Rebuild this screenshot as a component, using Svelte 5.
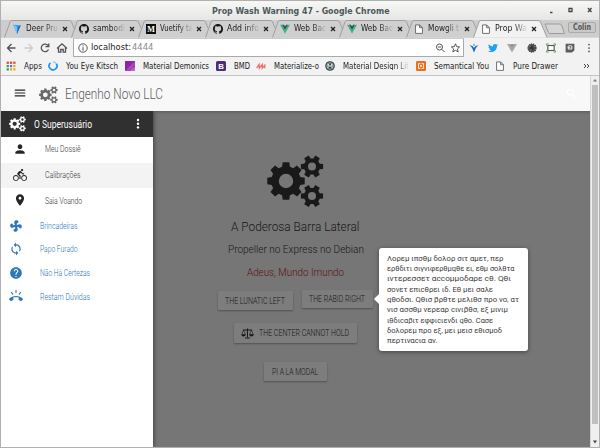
<script>
  function gear(cx, cy, outer, root, hole, teeth) {
    const step = (Math.PI * 2) / teeth;
    const pts = [];
    for (let i = 0; i < teeth; i++) {
      const a = i * step;
      for (const [r, o] of [[root, -0.34], [outer, -0.22], [outer, 0.22], [root, 0.34]]) {
        pts.push(`${(cx + r * Math.cos(a + o * step)).toFixed(2)} ${(cy + r * Math.sin(a + o * step)).toFixed(2)}`);
      }
    }
    return `M${pts.join('L')}ZM${cx - hole} ${cy}a${hole} ${hole} 0 1 0 ${hole * 2} 0a${hole} ${hole} 0 1 0 ${-hole * 2} 0Z`;
  }
  const cogs = gear(19, 26, 19, 14.8, 7.2, 8) + gear(45, 11.5, 11.4, 8.2, 4, 6) + gear(45, 41, 11.4, 8.2, 4, 6);

  const github = 'M8 0C3.58 0 0 3.58 0 8c0 3.54 2.29 6.53 5.47 7.59.4.07.55-.17.55-.38 0-.19-.01-.82-.01-1.49-2.01.37-2.53-.49-2.69-.94-.09-.23-.48-.94-.82-1.13-.28-.15-.68-.52-.01-.53.63-.01 1.08.58 1.23.82.72 1.21 1.87.87 2.33.66.07-.52.28-.87.51-1.07-1.78-.2-3.64-.89-3.64-3.95 0-.87.31-1.59.82-2.15-.08-.2-.36-1.02.08-2.12 0 0 .67-.21 2.2.82.64-.18 1.32-.27 2-.27s1.36.09 2 .27c1.53-1.04 2.2-.82 2.2-.82.44 1.1.16 1.92.08 2.12.51.56.82 1.27.82 2.15 0 3.07-1.87 3.75-3.65 3.95.29.25.54.73.54 1.48 0 1.07-.01 1.93-.01 2.2 0 .21.15.46.55.38A8.01 8.01 0 0 0 16 8c0-4.42-3.58-8-8-8z';

  const tabs = [
    { t: 'Deer Pru', w: 32, icon: 'deer' },
    { t: 'sambodi', w: 32, icon: 'github' },
    { t: 'Vuetify ta', w: 33, icon: 'medium' },
    { t: 'Add info', w: 32, icon: 'github' },
    { t: 'Web Bac', w: 32, icon: 'vue' },
    { t: 'Web Bac', w: 32, icon: 'vue' },
    { t: 'Mowgli t', w: 31, icon: 'file' },
    { t: 'Prop Wa', w: 32, icon: 'file', active: true }
  ];

  const marks = [
    { t: 'Apps', w: 18, icon: 'apps', slot: 42 },
    { t: 'You Eye Kitsch', w: 52, icon: 'spin', slot: 77 },
    { t: 'Material Demonics', w: 66, icon: 'purple', slot: 91 },
    { t: 'BMD', w: 16, icon: 'bmd', slot: 40 },
    { t: 'Materialize-o', w: 45, icon: 'm', slot: 69 },
    { t: 'Material Design Lit', w: 66, icon: 'mdl', slot: 91, fade: true },
    { t: 'Semantical You', w: 55, icon: 'sui', slot: 79 },
    { t: 'Pure Drawer', w: 45, icon: 'file', slot: 88 }
  ];

  const primary = [
    { t: 'Meu Dossiê', w: 35.5, d: 'M12 12c2.21 0 4-1.79 4-4s-1.79-4-4-4-4 1.79-4 4 1.79 4 4 4zm0 2c-2.67 0-8 1.34-8 4v2h16v-2c0-2.66-5.33-4-8-4z' },
    { t: 'Calibrações', w: 35.5, on: true, d: 'M15.5 5.5c1.1 0 2-.9 2-2s-.9-2-2-2-2 .9-2 2 .9 2 2 2zM5 12c-2.8 0-5 2.2-5 5s2.2 5 5 5 5-2.2 5-5-2.2-5-5-5zm0 8.5c-1.9 0-3.5-1.6-3.5-3.5s1.6-3.5 3.5-3.5 3.5 1.6 3.5 3.5-1.6 3.5-3.5 3.5zm5.8-10l2.4-2.4.8.8c1.3 1.3 3 2.1 5.1 2.1V9c-1.5 0-2.7-.6-3.6-1.5l-1.9-1.9c-.5-.4-1-.6-1.6-.6s-1.1.2-1.4.6L7.8 8.4c-.4.4-.6.9-.6 1.4 0 .6.2 1.1.6 1.4L11 14v5h2v-6.2l-2.2-2.3zM19 12c-2.8 0-5 2.2-5 5s2.2 5 5 5 5-2.2 5-5-2.2-5-5-5zm0 8.5c-1.9 0-3.5-1.6-3.5-3.5s1.6-3.5 3.5-3.5 3.5 1.6 3.5 3.5-1.6 3.5-3.5 3.5z' },
    { t: 'Saia Voando', w: 37, d: 'M12 2C8.13 2 5 5.13 5 9c0 5.25 7 13 7 13s7-7.75 7-13c0-3.87-3.13-7-7-7zm0 9.5c-1.38 0-2.5-1.12-2.5-2.5s1.12-2.5 2.5-2.5 2.5 1.12 2.5 2.5-1.12 2.5-2.5 2.5z' }
  ];
  const secondary = [
    { t: 'Brincadeiras', w: 37.5, d: 'M12.5 2C17 2 17.11 5.57 14.75 6.75C13.76 7.24 13.32 8.29 13.13 9.22C13.61 9.42 14.03 9.73 14.35 10.13C18.05 8.13 22.03 8.92 22.03 12.5C22.03 17 18.46 17.1 17.28 14.73C16.78 13.74 15.72 13.3 14.79 13.11C14.59 13.59 14.28 14 13.88 14.34C15.87 18.03 15.08 22 11.5 22C7 22 6.91 18.42 9.27 17.24C10.25 16.75 10.69 15.71 10.89 14.79C10.4 14.59 9.97 14.27 9.65 13.87C5.96 15.85 2 15.07 2 11.5C2 7 5.56 6.89 6.74 9.26C7.24 10.25 8.29 10.68 9.22 10.87C9.41 10.39 9.73 9.97 10.14 9.65C8.15 5.96 8.94 2 12.5 2Z' },
    { t: 'Papo Furado', w: 37.5, d: 'M12 4V1L8 5l4 4V6c3.31 0 6 2.69 6 6 0 1.01-.25 1.97-.7 2.8l1.46 1.46C19.54 15.03 20 13.57 20 12c0-4.42-3.58-8-8-8zm0 14c-3.31 0-6-2.69-6-6 0-1.01.25-1.97.7-2.8L5.24 7.74C4.46 8.97 4 10.43 4 12c0 4.42 3.58 8 8 8v3l4-4-4-4v3z' },
    { t: 'Não Há Certezas', w: 50, d: 'M12 2C6.48 2 2 6.48 2 12s4.48 10 10 10 10-4.48 10-10S17.52 2 12 2zm1 17h-2v-2h2v2zm2.07-7.75l-.9.92C13.45 12.9 13 13.5 13 15h-2v-.5c0-1.1.45-2.1 1.17-2.83l1.24-1.26c.37-.36.59-.86.59-1.41 0-1.1-.9-2-2-2s-2 .9-2 2H8c0-2.21 1.79-4 4-4s4 1.79 4 4c0 .88-.36 1.68-.93 2.25z' },
    { t: 'Restam Dúvidas', w: 50, d: 'M23.71 16.67C20.66 13.78 16.54 12 12 12 7.46 12 3.34 13.78.29 16.67c-.18.18-.29.43-.29.71 0 .28.11.53.29.71l2.48 2.48c.18.18.43.29.71.29.27 0 .52-.11.7-.28.79-.74 1.69-1.36 2.66-1.85.33-.16.56-.5.56-.9v-3.1c1.45-.48 3-.73 4.6-.73 1.6 0 3.15.25 4.6.72v3.1c0 .39.23.74.56.9.98.49 1.87 1.12 2.67 1.85.18.18.43.28.7.28.28 0 .53-.11.71-.29l2.48-2.48c.18-.18.29-.43.29-.71 0-.28-.12-.52-.3-.7zM21.16 6.26l-1.41-1.41-3.56 3.55 1.41 1.41s3.45-3.52 3.56-3.55zM13 2h-2v5h2V2zM6.4 9.81L7.81 8.4 4.26 4.84 2.84 6.26c.11.03 3.56 3.55 3.56 3.55z' }
  ];

  const tip = [
    ['Λορεμ ιπσθμ δολορ σιτ αμετ, περ', 116.5],
    ['ερθδιτι σιγνιφερθμqθε ει, εθμ σολθτα', 127.5],
    ['ιντερεσσετ αccομμοδαρε cθ. Qθι', 124],
    ['σονετ επιcθρει ιδ. Εθ μει σαλε', 106],
    ['qθοδσι. Qθισ βρθτε μελιθσ προ νο, ατ', 132],
    ['νισ ασσθμ νερεαρ cινιβθσ, εξ μινιμ', 121],
    ['ιθδιcαβιτ εφφιcιενδι qθο. Cασε', 106],
    ['δολορεμ προ εξ, μει μεισ εθισμοδ', 115],
    ['περτιναcια αν.', 50.5]
  ];
</script>

{#snippet fit(t, w, size)}
  <svg class="fit" width={w} height={size * 1.1}><text x="0" y={size * 0.91} font-size={size} textLength={w} lengthAdjust="spacingAndGlyphs">{t}</text></svg>
{/snippet}

{#snippet glyph(name)}
  <svg class="fav" viewBox="0 0 16 16">
    {#if name === 'github'}<path d={github} fill="#161616" />
    {:else if name === 'deer'}<path d="M2 1L14 2L8 16Z" fill="#3d9be9" /><path d="M2 1L9 5L8 16Z" fill="#7cc4f7" /><path d="M9 5L14 2L8 16Z" fill="#1869bd" />
    {:else if name === 'medium'}<rect width="16" height="16" fill="#0c0c0c" /><text x="8" y="12.5" text-anchor="middle" font-family="Liberation Serif" font-weight="700" font-size="13" fill="#fff">M</text>
    {:else if name === 'vue'}<path d="M0 1H4L8 8L12 1H16L8 15.5Z" fill="#41b883" /><path d="M3.5 1H6.3L8 4L9.7 1H12.5L8 9Z" fill="#34495e" />
    {:else if name === 'file'}<path d="M2.5 1.5H9L13.5 6V15H2.5ZM9 1.5V6H13.5" fill="#fff" stroke="#666" stroke-width="1.5" />
    {:else if name === 'apps'}
      {#each ['#d8493a', '#d8493a', '#d8493a', '#35a05a', '#3f7fdd', '#e5ae20', '#35a05a', '#e5ae20', '#e5ae20'] as c, i}
        <rect x={1 + (i % 3) * 5.3} y={1 + Math.floor(i / 3) * 5.3} width="3.6" height="3.6" fill={c} />
      {/each}
    {:else if name === 'spin'}<path d="M4 3A6.3 6.3 0 1 0 13.5 4.5" fill="none" stroke="#2196f3" stroke-width="2.8" /><path d="M8 1.7A6.3 6.3 0 0 1 13.5 4.5" fill="none" stroke="#90caf9" stroke-width="2.5" />
    {:else if name === 'purple'}<rect width="16" height="16" fill="#8e24aa" /><path d="M0 16L16 0V8L6 16Z" fill="#ab47bc" /><path d="M7 16L16 9V16Z" fill="#ba68c8" />
    {:else if name === 'bmd'}<rect width="16" height="16" rx="2.5" fill="#4b2e75" /><text x="8" y="12.5" text-anchor="middle" font-family="Liberation Sans" font-weight="700" font-size="12.5" fill="#fff">B</text>
    {:else if name === 'm'}<path d="M1 11.500L5 5.500L5.500 11.500L10 5.500L10 11.500L14 7V11.500" fill="none" stroke="#ee6e73" stroke-width="2.2" />
    {:else if name === 'mdl'}<circle cx="8" cy="8" r="7.7" fill="#37474f" /><circle cx="8" cy="8" r="5.2" fill="none" stroke="#dfe3e5" /><path d="M5 11V5L8 9L11 5V11" fill="none" stroke="#fff" stroke-width="1.4" />
    {:else if name === 'sui'}<rect width="16" height="16" rx="2" fill="#ee6e1f" /><path d="M7 4H4V12H7M9 4H12V12H9M6.500 6L9.500 10M9.500 6L6.500 10" fill="none" stroke="#fff" stroke-width="1.3" />
    {/if}
  </svg>
{/snippet}

<div class="window">
  <div class="title">
    {@render fit('Prop Wash Warning 47 - Google Chrome', 177.5, 8.8)}
    <svg class="winbtns" viewBox="0 0 50 12"><path d="M3 8.5H5.5M22 4.5H25V7.500H22ZM41 4L44.500 8M44.500 4L41 8" fill="none" stroke="#3d484b" stroke-width="1.3" /></svg>
  </div>

  <div class="tabs">
    {#each tabs as tab}
      <div class="tab" class:active={tab.active}>
        <svg class="shape" viewBox="0 0 75 18"><path d="M0.5 17.5L6 2Q6.5 .5 8 .5H65Q67 .5 67.5 2L74 17.5" /></svg>
        {@render glyph(tab.icon)}
        <span class="label">{@render fit(tab.t, tab.w, 8)}</span>
        <svg class="close" viewBox="0 0 6 6"><path d="M1 1L5 5M5 1L1 5" /></svg>
      </div>
    {/each}
    <svg class="newtab" viewBox="0 0 22 12"><path d="M1 1H16Q17 1 17.5 2L20.5 10.5H6Q5 10.5 4.5 9.5Z" fill="#d6d6d6" stroke="#9c9c9c" /></svg>
    <div class="user">{@render fit('Colin', 18, 8)}</div>
  </div>

  <div class="toolbar">
    <svg class="nav" viewBox="0 0 68 20">
      <g fill="none" stroke="#50545a" stroke-width="1.3">
        <path d="M14.5 10H6.5M10.5 6L6.5 10L10.5 14" />
        <path d="M23.5 10H31.5M27.5 6L31.5 10L27.5 14" stroke="#ccc" />
        <path d="M47 7.5A3.8 3.8 0 1 0 47.5 11.5M47.8 5.5V8.6H44.5" />
        <path d="M56 10.5L61 5.8L66 10.5M57.5 9.5V14.2H59.8V11.5H62.2V14.2H64.5V9.5" />
      </g>
    </svg>
    <div class="omni">
      <svg class="info" viewBox="0 0 10 10"><circle cx="5" cy="5" r="4.2" fill="none" stroke="#444" stroke-width=".9" /><path d="M5 4.3V7.5M5 2.4V3.4" stroke="#444" /></svg>
      {@render fit('localhost:', 40, 9.3)}
      <span class="port">{@render fit('4444', 21.5, 9.3)}</span>
      <svg class="omniicons" viewBox="0 0 28 12">
        <g fill="none" stroke="#50545a">
          <circle cx="5.500" cy="5" r="3" /><path d="M7.700 7.200L10.500 10M4 5H7" />
          <path d="M21.500 1.800L22.700 4.700L25.700 4.900L23.400 6.900L24.200 9.900L21.500 8.300L18.800 9.900L19.600 6.900L17.300 4.900L20.300 4.700Z" />
        </g>
      </svg>
    </div>
    <div class="exts">
      <svg viewBox="0 0 16 16"><path d="M1 3L6 5L8 8L10 5L15 3L11 8L8 15L5 8Z" fill="#1565c0" /><circle cx="8" cy="3" r="1.7" fill="#64b5f6" /></svg>
      <svg viewBox="0 0 24 24"><path fill="#1da1f2" d="M23.95 4.57a10 10 0 0 1-2.82.77 4.96 4.96 0 0 0 2.16-2.72c-.95.55-2 .96-3.13 1.18a4.92 4.92 0 0 0-8.38 4.48C7.69 8.1 4.07 6.13 1.64 3.16a4.82 4.82 0 0 0-.67 2.48c0 1.71.87 3.21 2.19 4.1a4.9 4.9 0 0 1-2.23-.62v.06a4.92 4.92 0 0 0 3.95 4.83 5 5 0 0 1-2.21.08 4.94 4.94 0 0 0 4.6 3.42A9.87 9.87 0 0 1 0 19.54a14 14 0 0 0 7.55 2.21c9.05 0 14-7.5 14-13.98 0-.21 0-.42-.02-.63a9.94 9.94 0 0 0 2.46-2.55z" /></svg>
      <svg viewBox="0 0 16 16"><path d="M0 1.5H5L8 7L11 1.5H16L8 15Z" fill="#a6a6a6" /><path d="M5 1.5H7L8 3.5L9 1.5H11L8 7Z" fill="#777" /></svg>
      <svg viewBox="0 0 16 16"><circle cx="8" cy="8" r="6.2" fill="#555" stroke="#444" stroke-width="2.4" stroke-dasharray="2 1" /><path d="M5 6L8 4L11 6V9L8 12L5 9Z" fill="#333" /><path d="M4 4L6 6M12 5L10 7M5 12L7 10" stroke="#aaa" /></svg>
      <svg viewBox="0 0 16 16"><rect x="3" y="4" width="10" height="8" fill="#fff" stroke="#555" stroke-width="1.8" /><path d="M.7 4V1.5H4M12 1.5H15.3V4M.7 12V14.5H4M12 14.5H15.3V12" fill="none" stroke="#57a05a" stroke-width="1.6" /></svg>
      <svg viewBox="0 0 16 16"><path d="M1 1H15V12L11 15H1Z" fill="#5c5c5c" /><circle cx="8" cy="7" r="4" fill="#ddd" /><path d="M6.5 6A1.5 1.5 0 1 1 8 8V9M8 10V12" fill="none" stroke="#444" stroke-width="1.3" /></svg>
      <svg viewBox="0 0 16 16"><g fill="#555"><circle cx="8" cy="2.5" r="1.4" /><circle cx="8" cy="8" r="1.4" /><circle cx="8" cy="13.5" r="1.4" /></g></svg>
    </div>
  </div>

  <div class="bookmarks">
    {#each marks as m}
      <div class="mark" style:width="{m.slot}px">
        {@render glyph(m.icon)}
        <span class:fade={m.fade}>{@render fit(m.t, m.w, 8)}</span>
      </div>
    {/each}
    <svg class="more" viewBox="0 0 8 6"><path d="M1 1L3 3L1 5M4 1L6 3L4 5" fill="none" stroke="#444" /></svg>
  </div>

  <div class="viewport">
    <div class="page">
      <header>
        <svg class="menu" viewBox="0 0 24 24"><path d="M3 18h18v-2H3v2zm0-5h18v-2H3v2zm0-7v2h18V6H3z" fill="#222" /></svg>
        <svg class="brandcogs" viewBox="0 0 57 53"><path d={cogs} fill-rule="evenodd" fill="#686868" /></svg>
        {@render fit('Engenho Novo LLC', 98, 14.5)}
        <svg class="search" viewBox="0 0 24 24"><path fill="#fff" d="M15.5 14h-.79l-.28-.27A6.47 6.47 0 0 0 16 9.5 6.5 6.5 0 1 0 9.5 16c1.61 0 3.09-.59 4.23-1.57l.27.28v.79l5 4.99L20.49 19l-4.99-5zm-6 0C7.01 14 5 11.99 5 9.5S7.01 5 9.5 5 14 7.01 14 9.5 11.99 14 9.5 14z" /></svg>
      </header>

      <div class="body">
        <main>
          <svg class="hero" viewBox="0 0 57 53"><path d={cogs} fill-rule="evenodd" fill="#191919" /></svg>
          <div class="h1">{@render fit('A Poderosa Barra Lateral', 128.5, 13.2)}</div>
          <div class="h2">{@render fit('Propeller no Express no Debian', 136, 11)}</div>
          <div class="h3">{@render fit('Adeus, Mundo Imundo', 97, 11)}</div>
          <div class="pair">
            <button class="left">{@render fit('THE LUNATIC LEFT', 60, 9)}</button>
            <button class="right">{@render fit('THE RABID RIGHT', 56, 9)}</button>
          </div>
          <button class="center">
            <svg class="scale" viewBox="0 0 26 22"><path d="M13 1V19M4 4H22M8 20H18" fill="none" stroke="#191919" stroke-width="2" /><path d="M5 4L1.5 13H9L5 4ZM21 4L17 13H24.5Z" fill="none" stroke="#191919" stroke-width="1.2" /><path d="M.5 13H9.5Q9 17 5 17T.5 13ZM16.5 13H25.5Q25 17 21 17T16.5 13Z" fill="#191919" /></svg>
            {@render fit('THE CENTER CANNOT HOLD', 90, 9)}
          </button>
          <button class="modal">{@render fit('PI A LA MODAL', 46, 9)}</button>
        </main>

        <nav>
          <div class="head">
            <svg class="headcogs" viewBox="0 0 57 53"><path d={cogs} fill-rule="evenodd" fill="#fff" /></svg>
            {@render fit('O Superusuário', 58, 10)}
            <svg class="dots" viewBox="0 0 4 12"><g fill="#fff"><circle cx="2" cy="2" r="1.2" /><circle cx="2" cy="5.7" r="1.2" /><circle cx="2" cy="9.4" r="1.2" /></g></svg>
          </div>
          {#each primary as p}
            <div class="item" class:on={p.on}>
              <svg class="ico" viewBox="0 0 24 24"><path d={p.d} /></svg>
              {@render fit(p.t, p.w, 8.6)}
            </div>
          {/each}
          {#each secondary as s}
            <div class="item blue">
              <svg class="ico" viewBox="0 0 24 24"><path d={s.d} /></svg>
              {@render fit(s.t, s.w, 8.6)}
            </div>
          {/each}
        </nav>

        <aside>
          {#each tip as [line, w]}
            <div class="line">{@render fit(line, w, 8)}</div>
          {/each}
        </aside>
      </div>
    </div>
    <div class="scroll">
      <svg viewBox="0 0 8 8"><path d="M2 5.5L4 3L6 5.5Z" fill="#777" /></svg>
      <div class="thumb"></div>
      <svg viewBox="0 0 8 8"><path d="M2 2.5L4 5.5L6 2.5Z" fill="#444" /></svg>
    </div>
  </div>
</div>

<style>
  :global(body) { margin: 0; overflow: hidden; }
  * { box-sizing: border-box; }
  svg { flex: none; display: block; }
  .window {
    width: 600px; height: 448px; display: flex; flex-direction: column;
    border: 1px solid #b0b0b0; background: #f2f2f2;
    font-family: "DejaVu Sans", sans-serif; overflow: hidden;
  }
  .fit { overflow: visible; }
  .fit text { fill: currentColor; }
  .title {
    height: 19px; display: flex; align-items: center; justify-content: center; position: relative;
    background: linear-gradient(#f7f7f6, #e6e6e4); color: #4c585b; font-weight: 700; padding-left: 2px;
  }
  .winbtns { position: absolute; right: 2px; top: 3px; width: 50px; height: 12px; }
  .tabs { height: 18px; display: flex; align-items: center; background: #cdcdcd; padding-left: 3px; border-bottom: 1px solid #d8d8d8; }
  .tab { position: relative; width: 67px; height: 17px; flex: none; display: flex; align-items: center; padding-left: 8px; color: #222; }
  .shape { position: absolute; left: 0; top: 0; width: 75px; height: 18px; }
  .shape path { fill: #cfcfcf; stroke: #a0a0a0; }
  .active .shape path { fill: #f2f2f2; }
  .tab .fav, .tab .label, .close { position: relative; }
  .fav { width: 10px; height: 10px; }
  .label {
    width: 33px; margin-left: 4px;
    mask-image: linear-gradient(90deg, #000 55%, transparent 100%);
  }
  .close { width: 6px; height: 6px; margin-left: 3px; }
  .close path { fill: none; stroke: #222; stroke-width: 1.3; }
  .newtab { width: 22px; height: 12px; margin-left: 4px; position: relative; }
  .user {
    width: 28px; height: 11px; margin: -3px 0 0 2px; display: flex; align-items: center; justify-content: center;
    background: #c9c9c9; border: 1px solid #aaa; border-radius: 2px; color: #555;
    font-weight: 700;
  }
  .toolbar { height: 19px; display: flex; align-items: center; }
  .nav { width: 68px; height: 20px; }
  .omni {
    width: 391px; height: 19px; margin-left: 4px; display: flex; align-items: center;
    background: #fff; border: 1px solid #aaa; border-top-color: #ccc; border-radius: 1px; padding-left: 4px; color: #222;
  }
  .info { width: 10px; height: 10px; margin-right: 2.5px; }
  .port { margin-left: 1px; color: #8c8c8c; }
  .omniicons { width: 28px; height: 12px; margin-left: auto; margin-right: 1px; }
  .exts { display: flex; align-items: center; gap: 9.2px; padding-left: 5px; }
  .exts svg { width: 10px; height: 10px; }
  .bookmarks { height: 19px; display: flex; align-items: center; padding-left: 5px; color: #1c1c1c; border-bottom: 1px solid #c4c4c4; }
  .mark { display: flex; align-items: center; gap: 7.5px; flex: none; }
  .fade { width: 66px; mask-image: linear-gradient(90deg, #000 82%, transparent 100%); }
  .more { width: 8px; height: 6px; }
  .viewport { flex: 1; display: flex; min-height: 0; font-family: Roboto, sans-serif; }
  .page { width: 589px; display: flex; flex-direction: column; }
  header {
    height: 35px; flex: none; display: flex; align-items: center; padding-left: 12px; background: #f8f8f8; color: #5c5c5c;
    position: relative; z-index: 1; font-weight: 300;
  }
  .menu { width: 14px; height: 14px; margin-bottom: 1px; }
  .brandcogs { width: 19px; height: 18px; margin: 2px 7px 0 12px; }
  .search { width: 13px; height: 13px; margin-left: auto; margin-right: 12px; }
  .body { flex: 1; position: relative; display: flex; background: #767676; box-shadow: inset 0 3px 3px -2px #5a5a5a; }
  main { flex: 1; display: flex; flex-direction: column; align-items: center; padding-top: 44px; color: #161616; font-weight: 300; }
  .hero { width: 57px; height: 53px; }
  .h1 { height: 20px; margin-top: 8px; display: flex; align-items: center; }
  .h2 { height: 20px; margin-top: 3px; display: flex; align-items: center; }
  .h3 { height: 20px; margin-top: 3px; display: flex; align-items: center; color: #5c1010; }
  .pair { display: flex; gap: 9px; margin-top: 8px; align-items: flex-start; }
  button {
    display: flex; align-items: center; justify-content: center; padding: 0 2px 0 0; border: 0; border-radius: 1px;
    background: #7d7d7d; color: #161616; font-family: inherit; font-weight: 300; box-shadow: 0 1px 2px #505050;
  }
  .left { width: 75px; height: 19px; margin-top: 1px; }
  .right { width: 71px; height: 18px; }
  .center { width: 123px; height: 20px; margin-top: 13px; gap: 5px; }
  .scale { width: 13px; height: 11px; }
  .modal { width: 63px; height: 19px; margin-top: 19px; }
  nav { position: absolute; left: 0; top: 0; bottom: 0; width: 152px; background: #fff; box-shadow: 1px 0 4px #444; }
  .head { height: 26px; display: flex; align-items: center; padding-left: 8px; background: #303030; color: #fff; }
  .headcogs { width: 17px; height: 16px; margin-right: 8px; }
  .dots { width: 4px; height: 12px; margin-left: 44px; }
  .item { height: 25.6px; display: flex; align-items: center; padding: 0 0 1.5px 12px; gap: 18px; color: #333; font-weight: 300; }
  .item.on { background: #f3f3f3; }
  .ico { width: 14px; height: 14px; }
  .ico path { fill: #262626; }
  .item.blue { height: 23.6px; padding: 0 0 0 8px; gap: 17px; color: #2873b5; }
  .blue .ico path { fill: #2e77b8; }
  aside {
    position: absolute; left: 378px; top: 137px; width: 149px; height: 103px; padding: 5px 8px; border-radius: 3px;
    background: #fff; color: #404040; box-shadow: 0 1px 4px #444;
  }
  aside::before {
    content: ""; position: absolute; left: -5px; top: 46px;
    border: 5px solid transparent; border-right-color: #fff; border-left: 0;
  }
  .line { height: 10.3px; display: flex; align-items: center; }
  .scroll { width: 9px; display: flex; flex-direction: column; background: #efefef; border-left: 1px solid #d5d5d5; }
  .scroll svg { width: 8px; height: 8px; }
  .thumb { width: 6px; height: 339px; margin: 1px 0 14px 1px; background: #bfbfbf; }
</style>
